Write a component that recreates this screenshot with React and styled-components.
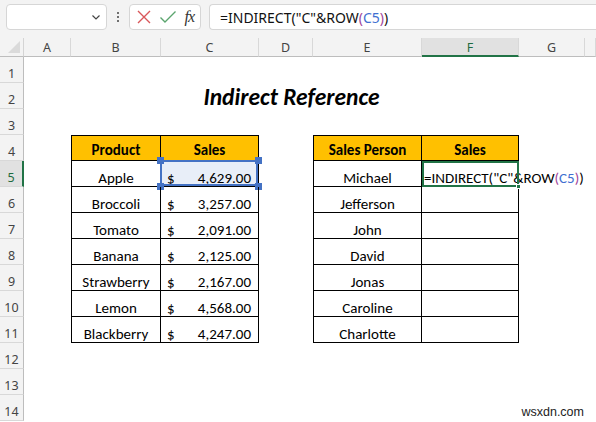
import React from "react";
import styled, { createGlobalStyle, css } from "styled-components";

const GlobalStyle = createGlobalStyle`
  html, body { margin: 0; padding: 0; background: #ffffff; }
  body { font-family: Calibri, Carlito, Lato, "Liberation Sans", sans-serif; overflow: hidden; }
  * { box-sizing: border-box; }
`;

const Page = styled.div`
  width: 596px;
  height: 422px;
  position: relative;
  overflow: hidden;
  background: #ffffff;
`;

const Toolbar = styled.div`
  height: 38px;
  background: #f3f3f3;
  display: flex;
  align-items: flex-start;
  padding: 4px 0 0 6px;
  gap: 6px;
`;

const Box = styled.div`
  height: 26px;
  background: #ffffff;
  border: 1px solid #d6d6d6;
  border-radius: 4px;
  display: flex;
  align-items: center;
`;

const NameBox = styled(Box)`
  width: 101px;
  justify-content: flex-end;
  padding-right: 4px;
`;

const Dots = styled.div`
  width: 10px;
  height: 26px;
  display: flex;
  flex-direction: column;
  align-items: center;
  justify-content: center;
  gap: 2px;
  span { width: 2px; height: 2px; background: #444; border-radius: 1px; }
`;

const ActionBox = styled(Box)`
  width: 72px;
  justify-content: space-between;
  padding: 0 6px 0 6px;
`;

const Fx = styled.span`
  font-family: "Liberation Serif", serif;
  font-style: italic;
  font-size: 16px;
  color: #333;
  letter-spacing: -1px;
`;

const FormulaInput = styled(Box)`
  flex: 1;
  margin-left: 2px;
  border-right: none;
  border-radius: 4px 0 0 4px;
  padding-left: 10px;
  font-family: "Noto Sans", "Open Sans", sans-serif;
  font-size: 14px;
  color: #111;
`;

const Sheet = styled.div`
  display: grid;
  grid-template-columns: 24px 47px 90px 98px 54px 109px 97px 66px 1fr;
  grid-template-rows: 19px repeat(14, 26px);
`;

const Corner = styled.div`
  background: #f3f3f3;
  border-right: 1px solid #d4d4d4;
  border-bottom: 1px solid #bdbdbd;
  position: relative;
  &::after {
    content: "";
    position: absolute;
    right: 3px;
    bottom: 3px;
    border-left: 12px solid transparent;
    border-bottom: 12px solid #dadada;
  }
`;

const ColHead = styled.div`
  background: ${(p) => (p.$active ? "#e1e1e1" : "#f3f3f3")};
  border-right: 1px solid #d8d8d8;
  border-bottom: ${(p) => (p.$active ? "2px solid #217346" : "1px solid #bdbdbd")};
  display: flex;
  align-items: center;
  justify-content: center;
  font-family: "Noto Sans", "Open Sans", sans-serif;
  font-size: 12.5px;
  color: ${(p) => (p.$active ? "#1e6b40" : "#444")};
  padding-top: ${(p) => (p.$active ? "1px" : "0")};
`;

const RowHead = styled.div`
  background: ${(p) => (p.$active ? "#e1e1e1" : "#f3f3f3")};
  border-right: ${(p) => (p.$active ? "2px solid #217346" : "1px solid #bdbdbd")};
  border-bottom: 1px solid #d8d8d8;
  display: flex;
  align-items: center;
  justify-content: center;
  padding-top: 7px;
  font-family: "Noto Sans", "Open Sans", sans-serif;
  font-size: 12.5px;
  color: ${(p) => (p.$active ? "#1e6b40" : "#444")};
`;

const Cell = styled.div`
  position: relative;
  display: flex;
  align-items: center;
  justify-content: center;
  padding: 9px 5px 0;
  font-size: 15px;
  color: #000;
  white-space: nowrap;
  ${(p) =>
    p.$boxed &&
    css`
      border-right: 1px solid #000;
      border-bottom: 1px solid #000;
    `}
  ${(p) => p.$first && css`border-left: 1px solid #000;`}
  ${(p) =>
    p.$head &&
    css`
      border-top: 1px solid #000;
      background: #ffc000;
      font-weight: bold;
      padding-top: 3px;
    `}
  ${(p) => p.$picked && css`background: #e8eef8;`}
`;

const Money = styled(Cell)`
  justify-content: space-between;
  padding: 9px 7px 0 6px;
`;

const Title = styled(Cell)`
  grid-column: span 3;
  font-size: 23.5px;
  font-weight: bold;
  font-style: italic;
  padding-top: 2px;
`;

const Editing = styled(Cell)`
  justify-content: flex-start;
  padding-left: 2px;
  overflow: visible;
  z-index: 2;
  &::after {
    content: "";
    position: absolute;
    inset: 0 -1px -1px 0;
    border: 2px solid #217346;
    pointer-events: none;
  }
`;

const FillHandle = styled.span`
  position: absolute;
  right: -3px;
  bottom: -3px;
  width: 5px;
  height: 5px;
  background: #217346;
  border: 1px solid #fff;
  z-index: 3;
`;

const RefBorder = styled.span`
  position: absolute;
  inset: -1px 0 0 -1px;
  border: 2px solid #4472c4;
  pointer-events: none;
`;

const Knob = styled.span`
  position: absolute;
  width: 7px;
  height: 7px;
  background: #4472c4;
  ${(p) => (p.$top ? "top: -4px;" : "bottom: -4px;")}
  ${(p) => (p.$left ? "left: -4px;" : "right: -4px;")}
`;

const Paren = styled.span`
  color: #a0459a;
`;

const Ref = styled.span`
  color: #3f6fd1;
`;

const Watermark = styled.div`
  position: absolute;
  right: 12px;
  bottom: 3px;
  font-family: "Liberation Sans", Arial, sans-serif;
  font-size: 12.5px;
  color: #222;
`;

const products = [
  ["Apple", "4,629.00"],
  ["Broccoli", "3,257.00"],
  ["Tomato", "2,091.00"],
  ["Banana", "2,125.00"],
  ["Strawberry", "2,167.00"],
  ["Lemon", "4,568.00"],
  ["Blackberry", "4,247.00"],
];

const people = ["Michael", "Jefferson", "John", "David", "Jonas", "Caroline", "Charlotte"];

const cols = ["A", "B", "C", "D", "E", "F", "G", ""];

const Chevron = () => (
  <svg width="12" height="12" viewBox="0 0 12 12">
    <path d="M2.5 4.5 L6 8 L9.5 4.5" fill="none" stroke="#444" strokeWidth="1.2" />
  </svg>
);

const Cross = () => (
  <svg width="16" height="16" viewBox="0 0 16 16">
    <path d="M2 2 L14 14 M14 2 L2 14" stroke="#d9575a" strokeWidth="1.4" />
  </svg>
);

const Check = () => (
  <svg width="18" height="16" viewBox="0 0 18 16">
    <path d="M1.5 8.5 L6 13 L16.5 2.5" fill="none" stroke="#5ba56e" strokeWidth="1.4" />
  </svg>
);

const Formula = () => (
  <>
    =INDIRECT("C"&amp;ROW<Paren>(</Paren>
    <Ref>C5</Ref>
    <Paren>)</Paren>)
  </>
);

function rowCells(r) {
  const blank = (c) => <Cell key={c} />;
  if (r === 2) {
    return [blank("A"), blank("B"), <Title key="t">Indirect Reference</Title>, blank("F"), blank("G"), blank("H")];
  }
  if (r === 4) {
    return [
      blank("A"),
      <Cell key="B" $boxed $first $head>Product</Cell>,
      <Cell key="C" $boxed $head>Sales</Cell>,
      blank("D"),
      <Cell key="E" $boxed $first $head>Sales Person</Cell>,
      <Cell key="F" $boxed $head>Sales</Cell>,
      blank("G"),
      blank("H"),
    ];
  }
  if (r >= 5 && r <= 11) {
    const [name, amount] = products[r - 5];
    const picked = r === 5;
    return [
      blank("A"),
      <Cell key="B" $boxed $first>{name}</Cell>,
      <Money key="C" $boxed $picked={picked}>
        <span>$</span>
        <span>{amount}</span>
        {picked && (
          <>
            <RefBorder />
            <Knob $top $left />
            <Knob $top />
            <Knob $left />
            <Knob />
          </>
        )}
      </Money>,
      blank("D"),
      <Cell key="E" $boxed $first>{people[r - 5]}</Cell>,
      picked ? (
        <Editing key="F" $boxed>
          <Formula />
          <FillHandle />
        </Editing>
      ) : (
        <Cell key="F" $boxed />
      ),
      blank("G"),
      blank("H"),
    ];
  }
  return cols.map((c, i) => blank(c + i));
}

export default function App() {
  const rows = Array.from({ length: 14 }, (_, i) => i + 1);
  return (
    <Page>
      <GlobalStyle />
      <Toolbar>
        <NameBox>
          <Chevron />
        </NameBox>
        <Dots>
          <span />
          <span />
          <span />
        </Dots>
        <ActionBox>
          <Cross />
          <Check />
          <Fx>fx</Fx>
        </ActionBox>
        <FormulaInput>
          <Formula />
        </FormulaInput>
      </Toolbar>
      <Sheet>
        <Corner />
        {cols.map((c, i) => (
          <ColHead key={"h" + i} $active={c === "F"}>
            {c}
          </ColHead>
        ))}
        {rows.map((r) => (
          <React.Fragment key={r}>
            <RowHead $active={r === 5}>{r}</RowHead>
            {rowCells(r)}
          </React.Fragment>
        ))}
      </Sheet>
      <Watermark>wsxdn.com</Watermark>
    </Page>
  );
}
